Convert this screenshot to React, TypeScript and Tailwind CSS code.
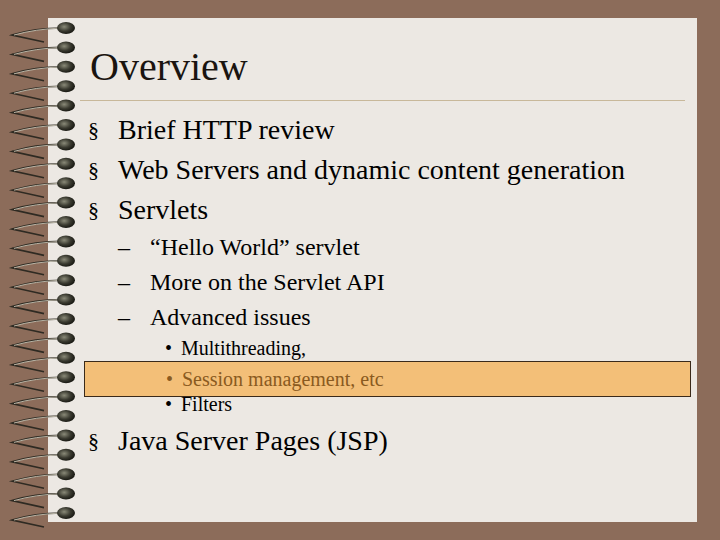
export default function App() {
  const rings = Array.from({ length: 26 }, (_, i) => 28 + i * 19.4);
  const serif = { fontFamily: '"Liberation Serif", serif' };
  return (
    <div className="relative w-[720px] h-[540px] bg-[#8c6c5a] overflow-hidden" style={serif}>
      <div className="absolute left-[48px] top-[18px] w-[649px] h-[504px] bg-[#ece8e3]" />
      <svg className="absolute left-0 top-0" width="90" height="540">
        <defs>
          <radialGradient id="h" cx="0.4" cy="0.4" r="0.6">
            <stop offset="0" stopColor="#8a8a78" />
            <stop offset="0.6" stopColor="#3a3a30" />
            <stop offset="1" stopColor="#1a1a14" />
          </radialGradient>
        </defs>
        {rings.map((y, i) => (
          <g key={i}>
            <path d={`M62 ${y} Q35 ${y} 12 ${y + 7} L44 ${y + 14}`} fill="none" stroke="#2e2a22" strokeWidth="1.6" />
            <path d={`M62 ${y} Q35 ${y + 1} 14 ${y + 7}`} fill="none" stroke="#d8d4c4" strokeWidth="0.8" />
            <ellipse cx="66" cy={y} rx="9" ry="6" fill="url(#h)" />
          </g>
        ))}
      </svg>
      <div className="relative pl-[90px] pt-[44px]">
        <div className="text-[40px] leading-[46px] text-[#1a1410]">Overview</div>
      </div>
      <div className="relative ml-[80px] mt-[10px] w-[605px] h-px bg-[#c8b89a]" />
      <div className="relative pl-[88px] pt-[9px] text-black">
        {["Brief HTTP review", "Web Servers and dynamic content generation", "Servlets"].map((t) => (
          <div key={t} className="flex items-center text-[28px] leading-[40px]">
            <span className="w-[30px] text-[22px]">§</span>
            <span>{t}</span>
          </div>
        ))}
        <div className="pl-[30px]">
          {["“Hello World” servlet", "More on the Servlet API", "Advanced issues"].map((t) => (
            <div key={t} className="flex text-[24px] leading-[35px]">
              <span className="w-[32px]">–</span>
              <span>{t}</span>
            </div>
          ))}
        </div>
        <div className="-mt-[1px] text-[20px] leading-[28px]">
          <div className="flex pl-[77px]"><span className="w-[16px]">•</span>Multithreading,</div>
          <div className="-mt-[1px] -ml-[4px] w-[607px] h-[36px] border border-[#3a2a1a] bg-[#f3bf78] flex items-center pl-[81px] text-[#8a5a20]">
            <span className="w-[16px]">•</span>Session management, etc
          </div>
          <div className="flex pl-[77px] -mt-[7px]"><span className="w-[16px]">•</span>Filters</div>
        </div>
        <div className="flex items-center text-[28px] leading-[40px] pt-[3px]">
          <span className="w-[30px] text-[22px]">§</span>
          <span>Java Server Pages (JSP)</span>
        </div>
      </div>
    </div>
  );
}
